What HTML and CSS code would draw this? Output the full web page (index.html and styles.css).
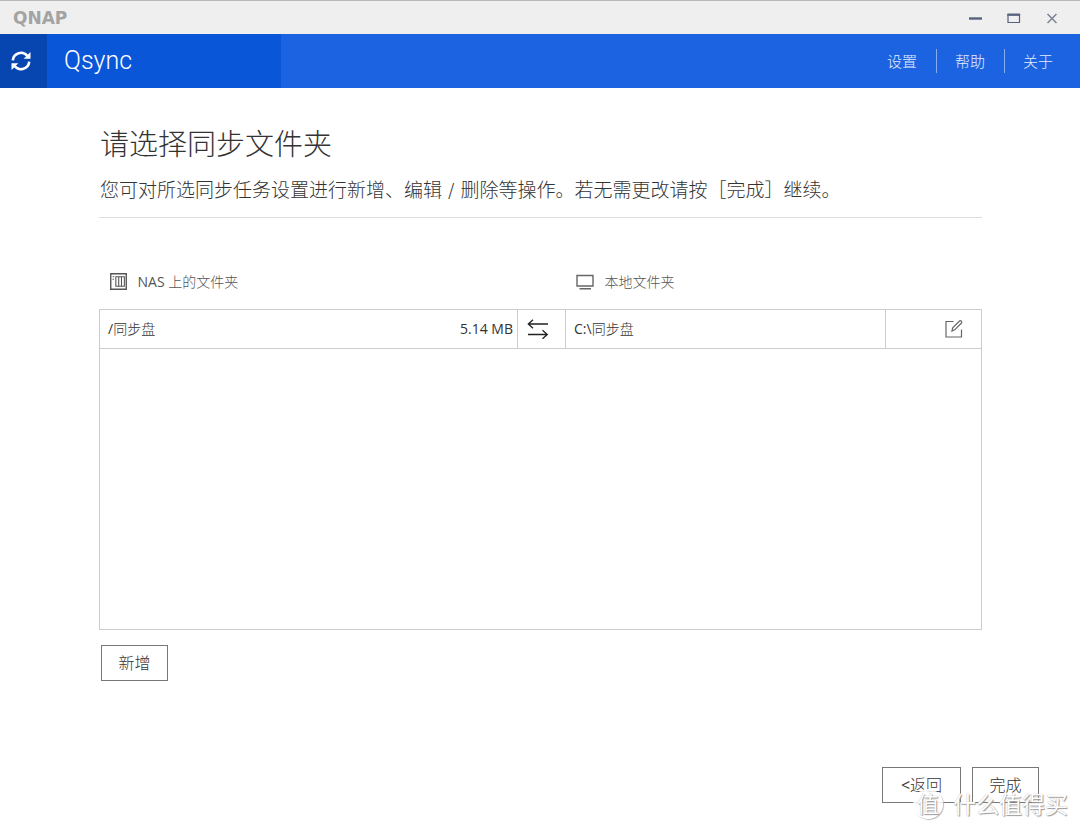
FILE: index.html
```html
<!DOCTYPE html>
<html lang="zh-CN">
<head>
<meta charset="utf-8">
<meta name="viewport" content="width=device-width, initial-scale=1">
<title>Qsync</title>
<link rel="stylesheet" href="styles.css">
</head>
<body>
<div class="window">
  <div class="titlebar">
    <span class="brand">QNAP</span>
    <div class="window-controls">
      <button class="window-button" type="button" aria-label="最小化"><svg width="14" height="14" viewBox="0 0 14 14"><path d="M0 7.5h13" stroke="#59627d" stroke-width="2.4"/></svg></button>
      <button class="window-button" type="button" aria-label="最大化"><svg width="14" height="14" viewBox="0 0 14 14"><path d="M1 3.5h11.500v8H1z" fill="none" stroke="#59627d" stroke-width="1.2"/><path d="M.4 3.700h12.700" stroke="#59627d" stroke-width="2.4"/></svg></button>
      <button class="window-button" type="button" aria-label="关闭"><svg width="14" height="14" viewBox="0 0 14 14"><path d="M2.500 3l9 9M11.500 3l-9 9" stroke="#7b8193" stroke-width="1.5"/></svg></button>
    </div>
  </div>
  <header class="header">
    <div class="sync-mark">
      <svg width="22" height="22" viewBox="0 0 22 22"><g fill="none" stroke="#fff" stroke-width="2.6"><path d="M2.800 10.400A8.200 8.200 0 0 1 17.400 6"/><path d="M19.200 11.600A8.200 8.200 0 0 1 4.600 16"/></g><path d="M20.500 2v6.800h-6.800zM1.500 20v-6.800h6.800z" fill="#fff"/></svg>
    </div>
    <div class="product">Qsync</div>
    <nav class="menu">
      <a class="menu-link" href="#">设置</a>
      <a class="menu-link" href="#">帮助</a>
      <a class="menu-link" href="#">关于</a>
    </nav>
  </header>
  <main class="content">
    <h1 class="title">请选择同步文件夹</h1>
    <p class="description">您可对所选同步任务设置进行新增、编辑 / 删除等操作。若无需更改请按［完成］继续。</p>
    <table class="folders">
      <colgroup><col class="col-nas"><col class="col-arrows"><col class="col-local"><col class="col-edit"></colgroup>
      <thead>
        <tr>
          <th class="heading" colspan="2" scope="col"><span class="heading-label">
            <svg width="17" height="17" viewBox="0 0 16 16" fill="none" stroke="#555"><path d="M.7.700h14.600v14.600H.7z" stroke-width="1.300"/><path d="M5.500 3.500h8v9h-8zM8.200 3.500v9M10.800 3.500v9"/><path d="M2.500 3.500h1.500M2.500 6h1"/></svg>
            <span><span class="latin">NAS </span>上的文件夹</span></span></th>
          <th class="heading" colspan="2" scope="col"><span class="heading-label">
            <svg width="18" height="16" viewBox="0 0 18 16" fill="none" stroke="#666" stroke-width="1.400"><path d="M1 1.500h16v10.500H1zM3.500 14.800h11.500"/></svg>
            本地文件夹</span></th>
        </tr>
      </thead>
      <tbody class="rows">
        <tr>
          <td class="cell"><div class="folder"><span><span class="latin">/</span>同步盘</span><span class="latin">5.14 MB</span></div></td>
          <td class="cell arrows"><svg class="icon" width="22" height="20" viewBox="0 0 22 20" fill="none" stroke="#222" stroke-width="1.300"><path d="M21 5H1.500M6 .700L1.300 5 6 9.300M1 15.500h19.500M15.500 11.200l4.800 4.300-4.800 4.300"/></svg></td>
          <td class="cell"><span class="latin">C:\</span>同步盘</td>
          <td class="cell edit"><button class="edit-button" type="button" aria-label="编辑"><svg class="icon" width="20" height="20" viewBox="0 0 20 20" fill="none" stroke="#666" stroke-width="1.200"><path d="M9.500 2.500H2v15.500h15.500V10.500"/><path d="M8 12l.7-3.200 6.800-6.800q1-.8 1.900.1.9 1 .1 1.900l-6.800 6.800z"/></svg></button></td>
        </tr>
        <tr><td class="empty" colspan="4"></td></tr>
      </tbody>
    </table>
    <button class="button" type="button">新增</button>
  </main>
  <footer class="footer">
    <button class="button button-back" type="button"><span class="latin">&lt;</span>返回</button>
    <button class="button" type="button">完成</button>
  </footer>
  <div class="watermark"><span class="watermark-mark">值</span><span>什么值得买</span></div>
</div>
</body>
</html>
```

FILE: styles.css
```css
* {
  box-sizing: border-box;
}

body {
  margin: 0;
  background: #fff;
  color: #333;
  font-family: "Open Sans", "Noto Sans CJK SC", sans-serif;
  font-weight: 300;
}

button {
  font: inherit;
  color: inherit;
}

.latin {
  font-weight: 400;
}

.window {
  position: relative;
  display: flex;
  flex-direction: column;
  min-height: 100vh;
}

.titlebar {
  display: flex;
  align-items: center;
  justify-content: space-between;
  height: 34px;
  padding: 0 21px 0 13px;
  background: #efefef;
  border-top: 1px solid #b8b8b8;
}

.brand {
  color: #a3a3a3;
  font: bold 17px/16px "DejaVu Sans", sans-serif;
}

.window-controls {
  display: flex;
  gap: 24px;
}

.window-button {
  display: flex;
  padding: 0;
  border: 0;
  background: none;
}

.header {
  display: flex;
  height: 54px;
  background: #1b63e1;
  color: #fff;
}

.sync-mark {
  display: flex;
  align-items: center;
  width: 47px;
  padding-left: 10px;
  background: #0746b0;
}

.product {
  width: 234px;
  padding-left: 17px;
  background: #0956d8;
  font: 300 25px/54px Roboto, sans-serif;
}

.menu {
  display: flex;
  align-items: center;
  margin-left: auto;
  padding-right: 8px;
}

.menu-link {
  padding: 0 19px 0 18px;
  color: #e4edff;
  font-size: 15px;
  line-height: 24px;
  text-decoration: none;
}

.menu-link + .menu-link {
  border-left: 1px solid #86acf2;
}

.content {
  padding: 36px 98px 0 99px;
}

.title {
  margin: 0;
  font-size: 29px;
  font-weight: 300;
  line-height: 40px;
}

.description {
  margin: 0;
  padding: 12px 0;
  border-bottom: 1px solid #ddd;
  font-family: "DejaVu Sans", "Noto Sans CJK SC", sans-serif;
  font-size: 19px;
  line-height: 29px;
}

.title,
.description {
  padding-left: 1px;
}

.folders {
  width: 100%;
  margin: 37px 0 15px;
  border-collapse: collapse;
  table-layout: fixed;
  font-size: 14px;
  line-height: 20px;
}

.col-nas {
  width: 418px;
}

.col-arrows {
  width: 48px;
}

.col-edit {
  width: 96px;
}

.heading {
  height: 54px;
  padding: 0 10px;
  color: #555;
  font-weight: 300;
  text-align: left;
}

.heading-label {
  display: flex;
  align-items: center;
  gap: 11px;
}

.rows {
  border: 1px solid #ccc;
}

.cell {
  height: 39px;
  padding: 0 4px 0 8px;
  border: 1px solid #ccc;
}

.folder {
  display: flex;
  justify-content: space-between;
}

.icon {
  display: block;
}

.arrows {
  padding: 0 9px;
}

.edit {
  padding-right: 17px;
}

.edit-button {
  display: block;
  margin-left: auto;
  padding: 0;
  border: 0;
  background: none;
}

.empty {
  height: 281px;
  padding: 0;
}

.button {
  min-width: 67px;
  height: 36px;
  margin-left: 2px;
  padding: 0 16px;
  border: 1px solid #777;
  background: #fff;
  font-size: 16px;
  line-height: 24px;
}

.footer {
  display: flex;
  gap: 9px;
  justify-content: flex-end;
  margin-top: auto;
  padding: 28px 41px;
}

.button-back {
  min-width: 79px;
}

.watermark {
  position: absolute;
  right: 12px;
  bottom: 11px;
  display: flex;
  align-items: center;
  gap: 10px;
  color: #fff;
  font-size: 23px;
  font-weight: 400;
  line-height: 32px;
  text-shadow: 1px 1px 1px #999, 0 0 1px #aaa;
  pointer-events: none;
}

.watermark-mark {
  width: 30px;
  height: 30px;
  border-radius: 50%;
  background: rgba(255, 255, 255, 0.85);
  box-shadow: 1px 1px 1px #bbb;
  font-size: 22px;
  line-height: 28px;
  text-align: center;
}
```
